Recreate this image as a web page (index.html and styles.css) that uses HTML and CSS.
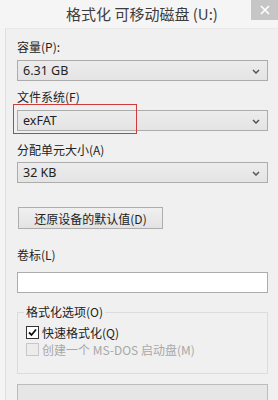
FILE: index.html
```html
<!DOCTYPE html>
<html lang="zh-CN">
<head>
    <meta charset="UTF-8">
    <title>格式化 可移动磁盘 (U:)</title>
    <link rel="stylesheet" href="styles.css">
</head>
<body>
    <div class="window">
        <div class="titlebar">
            <span class="title">格式化 可移动磁盘 (U:)</span>
            <div class="close">
                <svg width="10" height="10" viewBox="0 0 10 10"><path d="M1 1L9 9M9 1L1 9" stroke="#fff" stroke-width="1.6"/></svg>
            </div>
        </div>

        <div class="frame">
            <div class="content">
                <div class="label first">容量(P):</div>
                <div class="combo">
                    <span>6.31 GB</span>
                    <svg class="arrow" width="8" height="5" viewBox="0 0 8 5"><path d="M1 1L4 4L7 1" fill="none" stroke="#555" stroke-width="1.5"/></svg>
                </div>

                <div class="label">文件系统(F)</div>
                <div class="combo marked">
                    <span>exFAT</span>
                    <svg class="arrow" width="8" height="5" viewBox="0 0 8 5"><path d="M1 1L4 4L7 1" fill="none" stroke="#555" stroke-width="1.5"/></svg>
                    <div class="highlight"></div>
                </div>

                <div class="label third">分配单元大小(A)</div>
                <div class="combo narrow">
                    <span>32 KB</span>
                    <svg class="arrow" width="8" height="5" viewBox="0 0 8 5"><path d="M1 1L4 4L7 1" fill="none" stroke="#555" stroke-width="1.5"/></svg>
                </div>

                <button class="reset">还原设备的默认值(D)</button>

                <div class="label volume">卷标(L)</div>
                <div class="textbox"></div>

                <fieldset class="options">
                    <legend>格式化选项(O)</legend>
                    <div class="check">
                        <span class="box">
                            <svg width="9" height="9" viewBox="0 0 9 9"><path d="M1 4.5L3.5 7L8 1.5" fill="none" stroke="#111" stroke-width="1.8"/></svg>
                        </span>
                        快速格式化(Q)
                    </div>
                    <div class="check disabled">
                        <span class="box"></span>
                        创建一个 MS-DOS 启动盘(M)
                    </div>
                </fieldset>

                <div class="progress"></div>
            </div>
        </div>
    </div>
</body>
</html>
```

FILE: styles.css
```css
html, body {
    margin: 0;
    padding: 0;
}
body {
    width: 278px;
    height: 400px;
    overflow: hidden;
    background-color: #f0f0f0;
    font-family: "Noto Sans", "Noto Sans CJK SC", sans-serif;
    font-size: 12px;
    color: #222;
}
.window {
    height: 400px;
    display: flex;
    flex-direction: column;
}
.titlebar {
    height: 28px;
    flex-shrink: 0;
    background-color: #f5f5f5;
    display: flex;
    justify-content: center;
    align-items: center;
    position: relative;
}
.title {
    font-family: "Noto Sans CJK SC", sans-serif;
    font-size: 15px;
    color: #3c3c3c;
    margin-left: 6px;
    margin-top: -1px;
}
.close {
    position: absolute;
    top: 0;
    right: 0;
    width: 27px;
    height: 20px;
    background-color: #c6c6c6;
    display: flex;
    justify-content: center;
    align-items: center;
}
.frame {
    flex: 1;
    padding-left: 5px;
    background-color: #f4f4f4;
    display: flex;
}
.content {
    flex: 1;
    border-left: 1px solid #dedede;
    border-top: 1px solid #e8e8e8;
    background-color: #f0f0f0;
    padding: 0 10px 0 11px;
    display: flex;
    flex-direction: column;
}
.label {
    line-height: 16px;
    height: 16px;
    margin-top: 8px;
    margin-bottom: 5px;
    font-family: "Noto Sans CJK SC", sans-serif;
}
.label.first {
    margin-top: 10px;
}
.label.third {
    margin-top: 11px;
    margin-bottom: 4px;
}
.label.volume {
    margin-top: 18px;
    margin-bottom: 9px;
}
.combo {
    height: 21px;
    box-sizing: border-box;
    border: 1px solid #acacac;
    background: linear-gradient(#ececec, #e4e4e4);
    display: flex;
    align-items: center;
    justify-content: space-between;
    padding: 0 7px 0 5px;
    font-size: 12.5px;
    position: relative;
}
.combo .arrow {
    margin-top: 1px;
}
.highlight {
    position: absolute;
    left: -5px;
    top: -7px;
    width: 124px;
    height: 30px;
    box-sizing: border-box;
    border: 1px solid #d23a3a;
}
.reset {
    align-self: flex-start;
    margin: 24px 0 0 1px;
    width: 145px;
    height: 22px;
    border: 1px solid #adadad;
    background: linear-gradient(#f0f0f0, #e3e3e3);
    font-family: "Noto Sans CJK SC", sans-serif;
    font-size: 12px;
    color: #222;
    padding: 0;
}
.textbox {
    height: 21px;
    box-sizing: border-box;
    border: 1px solid #acacac;
    background-color: #fff;
}
.options {
    margin: 11px 0 0 0;
    padding: 4px 0 10px 8px;
    border: 1px solid #dcdcdc;
    height: 70px;
    box-sizing: border-box;
}
.options legend {
    padding: 0 2px;
    margin-left: -2px;
    line-height: 16px;
    font-family: "Noto Sans CJK SC", sans-serif;
}
.check {
    display: flex;
    align-items: center;
    gap: 3px;
    height: 17px;
    font-family: "Noto Sans CJK SC", sans-serif;
}
.box {
    width: 11px;
    height: 11px;
    border: 1px solid #333;
    background-color: #fff;
    display: flex;
    justify-content: center;
    align-items: center;
}
.check.disabled {
    color: #a8a8a8;
}
.check.disabled .box {
    border-color: #c8c8c8;
    background-color: #ececec;
}
.progress {
    margin-top: 10px;
    height: 30px;
    border: 1px solid #bcbcbc;
    background-color: #e6e6e6;
}
```
